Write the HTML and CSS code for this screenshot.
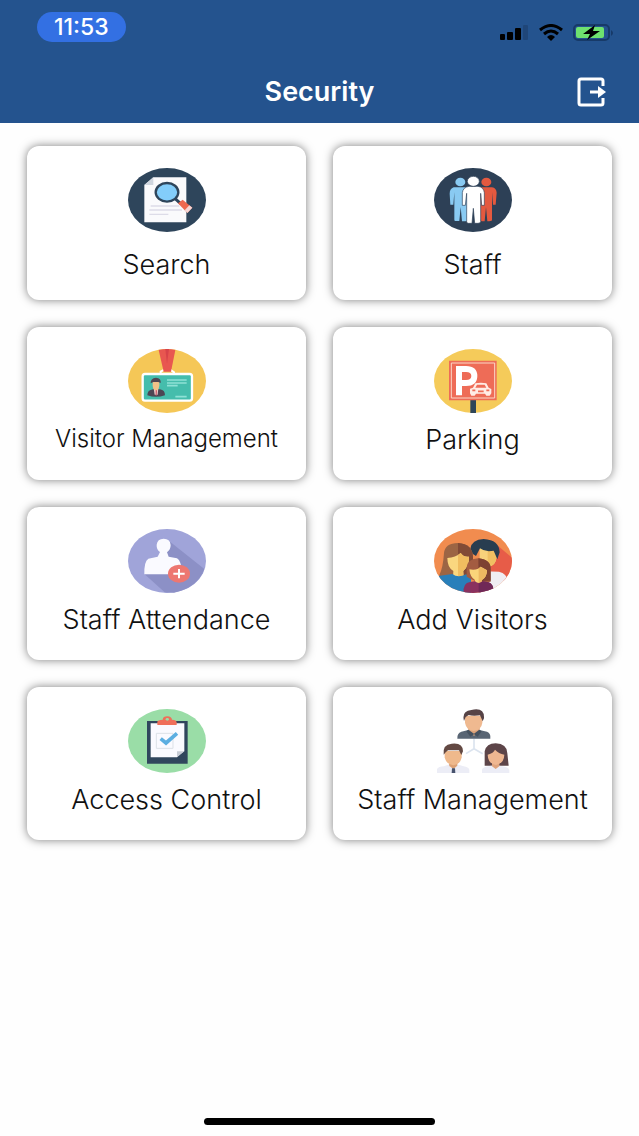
FILE: index.html
```
<!DOCTYPE html>
<html lang="en">
<head>
    <meta charset="UTF-8">
    <meta name="viewport" content="width=device-width, initial-scale=1.0">
    <title>Security</title>
    <link rel="stylesheet" href="styles.css">
</head>
<body>
    <header class="header">
        <div class="status-bar">
            <span class="time">11:53</span>
            <div class="status-icons">
                <svg width="30" height="18" viewBox="0 0 30 18" aria-hidden="true">
                    <rect x="1" y="10" width="5" height="6" rx="1"/>
                    <rect x="8" y="8" width="6" height="8" rx="1"/>
                    <rect x="16" y="4" width="6" height="12" rx="1"/>
                    <rect x="24" y="1" width="5" height="15" rx="1" fill="#1f4679"/>
                </svg>
                <svg width="26" height="18" viewBox="0 0 26 18" aria-hidden="true">
                    <path d="M2 6Q13-3 24 6" fill="none" stroke="#000" stroke-width="3"/>
                    <path d="M6 10Q13 4 20 10" fill="none" stroke="#000" stroke-width="3"/>
                    <path d="M9 13Q13 9 17 13L13 17Z"/>
                </svg>
                <svg width="42" height="18" viewBox="0 0 42 18" aria-hidden="true">
                    <rect x="1" y="1" width="35" height="15" rx="4" fill="none" stroke="#173a68" stroke-width="2"/>
                    <rect x="3" y="3" width="28" height="11" rx="2" fill="#6ee26f"/>
                    <path d="M38 6Q42 9 38 12Z" fill="#173a68"/>
                    <path d="M22 1L10 10H17L14 16L27 7H20Z"/>
                </svg>
            </div>
        </div>
        <div class="title-bar">
            <h1>Security</h1>
            <button class="logout" type="button" aria-label="Log out">
                <svg width="30" height="30" viewBox="0 0 30 30" fill="none" stroke="#fff" stroke-width="3" stroke-linejoin="round">
                    <path d="M26 9V4Q26 2 24 2H4Q2 2 2 4V26Q2 28 4 28H24Q26 28 26 26V21"/>
                    <path d="M13 15H23"/>
                    <path d="M21 9L29 15L21 21Z" fill="#fff" stroke="none"/>
                </svg>
            </button>
        </div>
    </header>

    <main class="menu">
        <a class="card card-spaced" href="#search">
            <svg class="icon" viewBox="34 24 234 192" aria-hidden="true">
                <ellipse cx="151" cy="120" rx="117" ry="96" fill="#2e455b"/>
                <path d="M110 52H209V187H83V75Z" fill="#fafafc"/>
                <path d="M110 52V75H83Z" fill="#cfd6df"/>
                <path d="M102 138H188M98 150H196M98 163H155" stroke="#dddce8" stroke-width="4"/>
                <path d="M172 113L192 131" stroke="#2e455b" stroke-width="9"/>
                <ellipse cx="151" cy="97" rx="34" ry="28" fill="#83cdfa" stroke="#2e455b" stroke-width="7"/>
                <path d="M184 130L198 119L227 143L212 159Z" fill="#ee684f"/>
                <path d="M218 136L227 143L212 159L204 151Z" fill="#f5d6d4"/>
            </svg>
            <span class="label">Search</span>
        </a>
        <a class="card card-spaced" href="#staff">
            <svg class="icon" viewBox="34 24 234 192" aria-hidden="true">
                <ellipse cx="151" cy="120" rx="117" ry="96" fill="#2d4056"/>
                <g fill="#89caf2">
                    <ellipse cx="113" cy="66" rx="15" ry="13"/>
                    <path d="M93 82H135V181Q134 184 128 184H118L114 141L110 183H98Q95 183 95 179V97L92 134H83L81 101Q81 86 93 82Z"/>
                </g>
                <g fill="#e4593f">
                    <ellipse cx="191" cy="66" rx="15" ry="13"/>
                    <path d="M170 82H208Q221 84 222 98L219 134H211L208 97V181Q206 184 194 184L190 141L186 184H176L170 170Z"/>
                </g>
                <g fill="#fff" stroke="#2d4056" stroke-width="2">
                    <path d="M139 79H166Q183 81 185 98V136H177L174 100V185Q173 190 166 190H156L152 145L148 190H137Q132 190 132 185V100L128 136H119V98Q121 82 139 79Z"/>
                    <ellipse cx="152" cy="64" rx="18" ry="15"/>
                </g>
            </svg>
            <span class="label">Staff</span>
        </a>
        <a class="card" href="#visitor-management">
            <svg class="icon" viewBox="34 24 234 192" aria-hidden="true">
                <ellipse cx="151" cy="120" rx="117" ry="96" fill="#f5c757"/>
                <path d="M132 105V92L143 86H161L172 94V105" fill="none" stroke="#fff" stroke-width="6"/>
                <path d="M126 27Q151 21 176 27L163 92H141Z" fill="#e85750"/>
                <path d="M146 24H157L151 68Z" fill="#d84349"/>
                <rect x="78" y="99" width="148" height="80" rx="7" fill="#45bdac" stroke="#fff" stroke-width="7"/>
                <path d="M92 163Q92 147 109 145H130Q145 147 145 163Q118 172 92 163Z" fill="#4d4654"/>
                <path d="M111 142H125L123 161H114Z" fill="#eacaca"/>
                <path d="M117 147H121L120 164H117Z" fill="#ca5565"/>
                <path d="M108 120H128V134Q126 148 118 148Q109 147 108 134Z" fill="#f2c188"/>
                <path d="M102 127Q101 112 118 110Q134 111 132 126L125 123H110Z" fill="#514652"/>
                <path d="M151 117H210M151 126H210M151 134H183M176 167H210" stroke="#8ee1d5" stroke-width="5"/>
            </svg>
            <span class="label label-small">Visitor Management</span>
        </a>
        <a class="card" href="#parking">
            <svg class="icon" viewBox="34 24 234 192" aria-hidden="true">
                <ellipse cx="151" cy="120" rx="117" ry="96" fill="#f5cb5a"/>
                <path d="M143 175H160V216H143Z" fill="#2f4658"/>
                <path d="M79 59H222V178H79Z" fill="#ee6c57"/>
                <path d="M86 66H216V171H86Z" fill="none" stroke="#fbd7c7" stroke-width="3"/>
                <path d="M109 163V84H130Q155 84 155 105Q155 126 130 126H109" fill="none" stroke="#fff" stroke-width="18"/>
                <path d="M142 143L151 140L158 127Q175 123 191 127L198 140L206 144V157L201 164H191L187 158H160L156 164H146L142 157Z" fill="#ffece5"/>
                <path d="M158 140L163 131H186L191 140Z" fill="#ee6c57"/>
                <path d="M149 148H158M191 148H200M166 151H183" stroke="#ee6c57" stroke-width="5"/>
            </svg>
            <span class="label">Parking</span>
        </a>
        <a class="card" href="#staff-attendance">
            <svg class="icon" viewBox="34 24 234 192" aria-hidden="true">
                <ellipse cx="151" cy="120" rx="117" ry="96" fill="#a0a4d9"/>
                <path d="M161 63L263 144Q242 201 172 215L144 214L84 160Z" fill="#8c90c6"/>
                <path d="M83 160Q82 121 95 113L123 107L130 93Q119 85 120 71Q122 53 141 53Q160 53 162 72Q162 86 151 94L156 107L181 112Q194 118 197 160Z" fill="#fafaff"/>
                <ellipse cx="187" cy="158" rx="33" ry="27" fill="#ed7771"/>
                <path d="M170 158H204M187 144V172" stroke="#fff" stroke-width="6"/>
            </svg>
            <span class="label">Staff Attendance</span>
        </a>
        <a class="card" href="#add-visitors">
            <svg class="icon" viewBox="34 24 234 192" aria-hidden="true">
                <defs>
                    <clipPath id="family"><ellipse cx="151" cy="120" rx="117" ry="96"/></clipPath>
                </defs>
                <g clip-path="url(#family)">
                    <path d="M34 24H268V216H34Z" fill="#f18c4f"/>
                    <path d="M206 58L268 110V180H200Z" fill="#e75c48"/>
                    <path d="M184 151L229 152Q261 158 268 216H178Z" fill="#f0edf2"/>
                    <path d="M171 78H222V109Q218 138 195 137Q174 135 171 109Z" fill="#f8d27b"/>
                    <path d="M195 78H222V109Q218 137 195 137Z" fill="#f0bf62"/>
                    <path d="M143 83Q147 56 183 54Q230 57 231 94L224 115Q217 98 213 89Q187 94 172 82L160 105L145 95Z" fill="#283d50"/>
                    <path d="M50 162Q61 141 64 96Q67 66 106 66Q149 69 151 106V166H50Z" fill="#9c6544"/>
                    <path d="M106 66Q151 69 151 111V166H106Z" fill="#814a36"/>
                    <path d="M74 111Q99 109 114 96Q125 110 139 107Q140 134 122 150L123 172H91L92 150Q74 140 74 111Z" fill="#fad77f"/>
                    <path d="M106 102L114 96Q125 110 139 107Q140 136 121 150L123 172L106 164Z" fill="#f0bd60"/>
                    <path d="M47 165L89 159Q106 172 130 160L145 168V216H47Z" fill="#287fba"/>
                    <path d="M132 167V139Q135 114 167 112Q204 115 204 145V182Q168 190 132 167Z" fill="#a35c41"/>
                    <path d="M167 112Q206 116 204 146V179L168 180Z" fill="#7d4132"/>
                    <path d="M140 145Q164 149 174 137L193 148Q193 168 178 177V191H157V177Q142 169 140 145Z" fill="#fad47a"/>
                    <path d="M168 142L174 137L193 148Q193 169 178 177V191H168Z" fill="#edb861"/>
                    <path d="M123 216Q120 186 142 183L157 181Q168 191 180 181L198 184Q213 188 213 216Z" fill="#8a315f"/>
                    <path d="M168 188L180 181L198 184Q213 188 213 216H168Z" fill="#702957"/>
                </g>
            </svg>
            <span class="label">Add Visitors</span>
        </a>
        <a class="card" href="#access-control">
            <svg class="icon" viewBox="34 24 234 192" aria-hidden="true">
                <ellipse cx="151" cy="120" rx="117" ry="96" fill="#9adda7"/>
                <path d="M91 60H213V188H91Z" fill="#30465d"/>
                <path d="M102 67H203V151L181 169H102Z" fill="#fafaff"/>
                <path d="M203 151V169H181Z" fill="#30465d"/>
                <path d="M203 151H181V169Z" fill="#c6cbd5"/>
                <path d="M119 97H169V142H119Z" fill="none" stroke="#dce1e7" stroke-width="3"/>
                <path d="M132 113L148 126L181 97" fill="none" stroke="#5caee1" stroke-width="11"/>
                <path d="M122 72V62Q123 57 138 56Q139 46 152 46Q165 47 166 56Q180 57 180 64V72Z" fill="#ef6f5a"/>
                <ellipse cx="152" cy="55" rx="5" ry="4" fill="#9adda7"/>
            </svg>
            <span class="label">Access Control</span>
        </a>
        <a class="card" href="#staff-management">
            <svg class="icon" viewBox="34 24 234 192" aria-hidden="true">
                <path d="M154 113V143L130 158M154 143L180 158" fill="none" stroke="#dce4ef" stroke-width="5"/>
                <path d="M104 113Q103 96 116 92L140 86H167L193 92Q205 96 203 113Z" fill="#596574"/>
                <path d="M137 80H171V87L154 105L137 87Z" fill="#dca27a"/>
                <path d="M137 86L131 91L143 107L154 100L165 107L177 91L170 86L154 98Z" fill="#45515f"/>
                <path d="M127 44H179V65Q176 87 153 90Q131 88 127 65Z" fill="#efb990"/>
                <path d="M124 60Q116 30 146 27Q186 18 184 52L180 61L172 43Q151 46 138 42L129 48Z" fill="#564346"/>
                <path d="M43 216V204Q47 197 64 196L80 190H103L123 196Q137 198 140 206V216Z" fill="#ecedf6"/>
                <path d="M79 188H104V194L92 204L80 195Z" fill="#dda174"/>
                <path d="M88 202H97L98 216H87Z" fill="#47536d"/>
                <path d="M66 150H117V169Q113 191 92 193Q70 190 66 169Z" fill="#efb98c"/>
                <path d="M63 161Q59 130 87 128Q121 124 121 151L116 162L109 148H76L69 154Z" fill="#634943"/>
                <path d="M186 194V151Q191 127 219 127Q253 128 254 157L258 194Z" fill="#5d4549"/>
                <path d="M178 216V205Q182 196 207 194H230Q258 197 260 207V216Z" fill="#ecedf6"/>
                <path d="M208 185H230V196L219 204L208 196Z" fill="#dfa47e"/>
                <path d="M195 161Q213 156 217 146Q228 158 245 161Q244 187 220 192Q196 188 195 161Z" fill="#efb791"/>
            </svg>
            <span class="label">Staff Management</span>
        </a>
    </main>

    <div class="home-indicator"></div>
</body>
</html>
```
FILE: styles.css
```
* {
    box-sizing: border-box;
}

body {
    margin: 0;
    min-height: 100vh;
    display: flex;
    flex-direction: column;
    background-color: #fefefe;
    font-family: Inter, "Liberation Sans", sans-serif;
    color: #111;
}

.header {
    background-color: #24538e;
    color: white;
    padding: 12px 24px 12px 37px;
}

.status-bar {
    display: flex;
    justify-content: space-between;
    align-items: center;
}

.time {
    padding: 0 17px;
    border-radius: 15px;
    background-color: #3370e3;
    font-size: 23px;
    font-weight: 500;
    line-height: 30px;
}

.status-icons {
    display: flex;
    gap: 9px;
    padding-top: 12px;
}

.title-bar {
    display: grid;
    grid-template-columns: 1fr auto 1fr;
    align-items: center;
    margin-top: 31px;
    margin-left: -13px;
}

h1 {
    grid-column: 2;
    margin: 0;
    font-size: 27px;
    font-weight: 600;
    line-height: 38px;
}

.logout {
    justify-self: end;
    margin-right: 8px;
    padding: 0;
    border: none;
    background: none;
    cursor: pointer;
}

.logout svg {
    display: block;
}

.menu {
    display: grid;
    grid-template-columns: 1fr 1fr;
    gap: 27px;
    padding: 23px 27px;
}

.card {
    display: flex;
    flex-direction: column;
    align-items: center;
    gap: 12px;
    min-height: 153px;
    padding: 22px 10px 20px;
    border-radius: 12px;
    background-color: white;
    box-shadow: 0 0 10px rgba(0, 0, 0, 0.5);
    color: inherit;
    text-decoration: none;
}

.card-spaced {
    gap: 18px;
}

.icon {
    width: 78px;
    height: 64px;
}

.label {
    font-size: 27px;
    font-weight: 300;
    line-height: 30px;
    text-align: center;
}

.label-small {
    font-size: 24px;
    line-height: 28px;
}

.home-indicator {
    width: 36%;
    height: 7px;
    margin: auto auto 11px;
    border-radius: 4px;
    background-color: black;
}
```
